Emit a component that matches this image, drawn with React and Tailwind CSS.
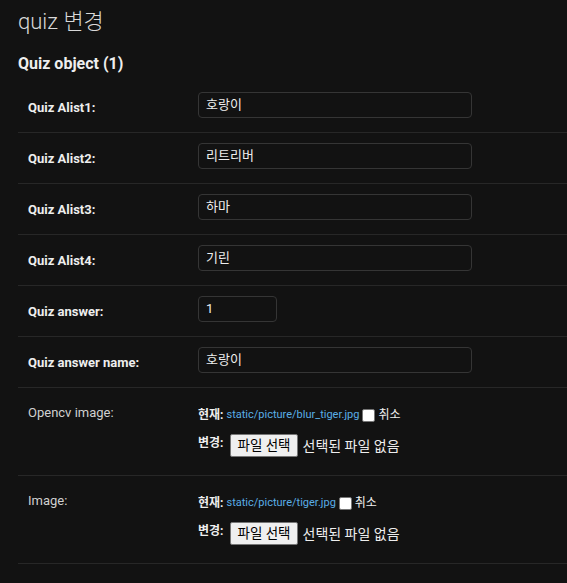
import React from "react";

const rows = [
  { label: "Quiz Alist1:", value: "호랑이" },
  { label: "Quiz Alist2:", value: "리트리버" },
  { label: "Quiz Alist3:", value: "하마" },
  { label: "Quiz Alist4:", value: "기린" },
  { label: "Quiz answer:", value: "1", small: true },
  { label: "Quiz answer name:", value: "호랑이" },
];

const files = [
  { label: "Opencv image:", path: "static/picture/blur_tiger.jpg" },
  { label: "Image:", path: "static/picture/tiger.jpg" },
];

function TextRow({ label, value, small }) {
  return (
    <div className="flex border-b border-[#272727] py-[10px] pl-[10px]">
      <div className="w-[170px] shrink-0 pt-[6px] text-[13px] leading-[20px] font-bold text-[#eeeeee]">
        {label}
      </div>
      <div className="h-[30px]">
        <div
          className={
            (small ? "w-[79px] " : "w-[274px] ") +
            "h-[26px] rounded-[4px] border border-[#353535] bg-[#121212] pl-[7px] text-[13px] leading-[24px] text-[#eeeeee]"
          }
        >
          {value}
        </div>
      </div>
    </div>
  );
}

function FileRow({ label, path }) {
  return (
    <div className="flex border-b border-[#272727] py-[10px] pl-[10px]">
      <div className="w-[170px] shrink-0 pt-[5px] text-[13px] leading-[20px] text-[#d0d0d0]">
        {label}
      </div>
      <div className="flex h-[67px] flex-col pt-[7px] text-[12px] text-[#eeeeee]">
        <div className="flex h-[20px] items-center">
          <span className="font-bold">현재:</span>
          <span className="ml-[3px] text-[11px] text-[#5aaee6]">{path}</span>
          <span className="ml-[3px] h-[13px] w-[13px] rounded-[2px] border border-[#767676] bg-white" />
          <span className="ml-[3px]">취소</span>
        </div>
        <div className="mt-[9px] flex h-[23px] items-start">
          <span className="mt-[1px] font-bold leading-[16px]">변경:</span>
          <span className="ml-[7px] flex h-[23px] items-center rounded-[2px] border border-[#767676] bg-[#efefef] px-[6px] text-[13.5px] text-black">
            파일 선택
          </span>
          <span className="ml-[5px] self-center pt-[2px] text-[14px]">선택된 파일 없음</span>
        </div>
      </div>
    </div>
  );
}

export default function App() {
  return (
    <div className="min-h-[583px] w-full bg-[#121212] pl-[18px] pt-[8px] font-['Roboto','Noto_Sans_CJK_KR',sans-serif] text-[#eeeeee]">
      <h1 className="text-[22px] leading-[28px] font-light text-[#d8d8d8]">quiz 변경</h1>
      <h2 className="mt-[18px] text-[16px] leading-[20px] font-bold text-[#eeeeee]">Quiz object (1)</h2>
      <div className="mt-[8px]">
        {rows.map((r) => (
          <TextRow key={r.label} {...r} />
        ))}
        {files.map((f) => (
          <FileRow key={f.label} {...f} />
        ))}
      </div>
    </div>
  );
}
